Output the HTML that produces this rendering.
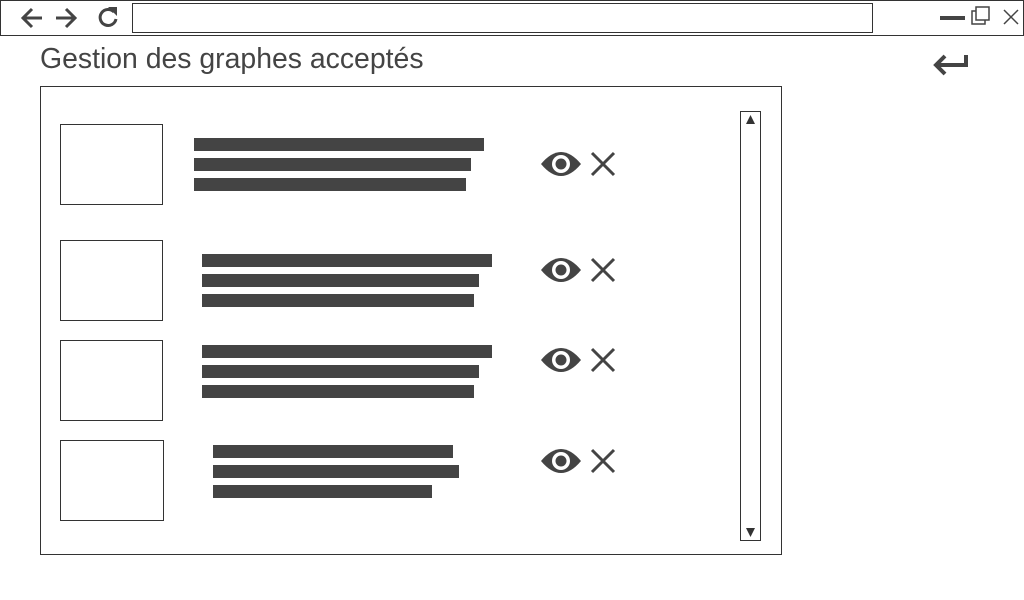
<!DOCTYPE html>
<html><head><style>
body{margin:0;width:1024px;height:600px;background:#fff;position:relative;overflow:hidden;font-family:"Liberation Sans",sans-serif}
div{position:absolute;box-sizing:border-box}
.b{border:1px solid #333}
.bar{background:#444;height:13px}
svg{position:absolute}
</style></head><body>
<div class="b" style="left:0;top:0;width:1024px;height:36px"></div>
<div class="b" style="left:132px;top:3px;width:741px;height:30px"></div>
<div style="left:40px;top:43px;font-size:28.4px;color:#444;white-space:nowrap">Gestion des graphes acceptés</div>
<div class="b" style="left:40px;top:86px;width:742px;height:469px"></div>
<div class="b" style="left:740px;top:111px;width:21px;height:430px"></div>
<svg style="left:740px;top:111px" width="21" height="430"><path d="M6 13l4.5-9 4.5 9zM6 417l4.5 9 4.5-9z" fill="#333"/></svg>
<div class="b" style="left:60px;top:124px;width:103px;height:81px"></div>
<div class="b" style="left:60px;top:240px;width:103px;height:81px"></div>
<div class="b" style="left:60px;top:340px;width:103px;height:81px"></div>
<div class="b" style="left:60px;top:440px;width:104px;height:81px"></div>
<div class="bar" style="left:194px;top:138px;width:290px"></div>
<div class="bar" style="left:194px;top:158px;width:277px"></div>
<div class="bar" style="left:194px;top:178px;width:272px"></div>
<div class="bar" style="left:202px;top:254px;width:290px"></div>
<div class="bar" style="left:202px;top:274px;width:277px"></div>
<div class="bar" style="left:202px;top:294px;width:272px"></div>
<div class="bar" style="left:202px;top:345px;width:290px"></div>
<div class="bar" style="left:202px;top:365px;width:277px"></div>
<div class="bar" style="left:202px;top:385px;width:272px"></div>
<div class="bar" style="left:213px;top:445px;width:240px"></div>
<div class="bar" style="left:213px;top:465px;width:246px"></div>
<div class="bar" style="left:213px;top:485px;width:219px"></div>
<svg style="left:0;top:0" width="1024" height="600">
<g stroke="#444" stroke-width="3" fill="none">
<path d="M42 18H24M32 9l-9 9 9 9"/>
<path d="M56 18h18M66 9l9 9-9 9"/>
<path d="M114 12a8 8 0 1 0 2 7"/>
<path d="M940 18h25" stroke-width="4"/>
<path d="M937 65h29V55M945 56l-9 9 9 9" stroke-width="4"/>
</g>
<path d="M108 7h9v9z" fill="#444"/>
<g stroke="#444" stroke-width="1.5" fill="none">
<rect x="976" y="7" width="13" height="13" fill="#fff"/>
<path d="M976 11h-4v13h13v-4"/>
<path d="M1004 10l14 14M1018 10l-14 14"/>
</g>
<defs><g id="ic">
<path d="M-20 0Q0-24 20 0Q0 24-20 0z" fill="#444"/>
<circle r="9" fill="#fff"/><circle r="5.5" fill="#444"/>
<path d="M31-11l22 22M53-11l-22 22" stroke="#444" stroke-width="3"/>
</g></defs>
<use href="#ic" x="561" y="164"/>
<use href="#ic" x="561" y="270"/>
<use href="#ic" x="561" y="360"/>
<use href="#ic" x="561" y="461"/>
</svg>
</body></html>
